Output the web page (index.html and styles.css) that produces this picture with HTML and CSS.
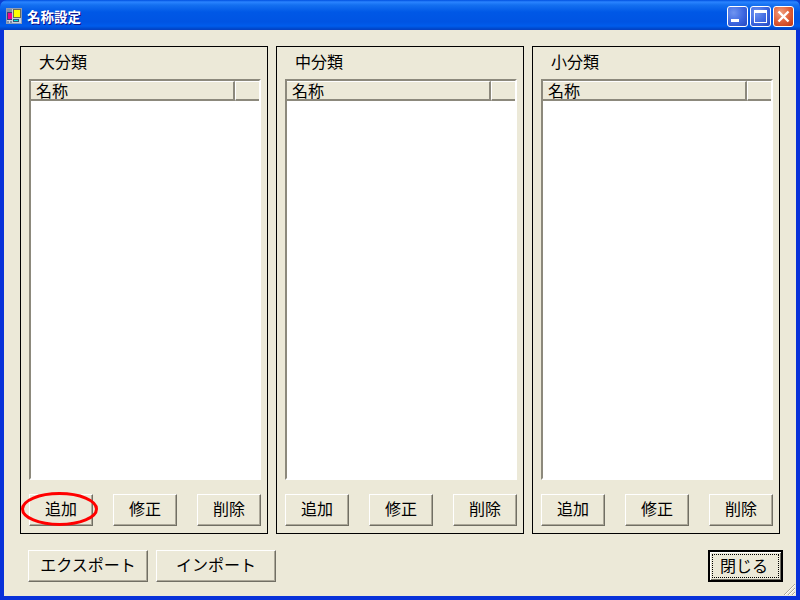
FILE: index.html
```html
<!DOCTYPE html>
<html lang="ja">
<head>
<meta charset="utf-8">
<title>名称設定</title>
<link rel="stylesheet" href="styles.css">
</head>
<body>
<div class="window">
  <header class="titlebar">
    <svg class="appicon" width="16" height="16" viewBox="0 0 16 16">
      <rect x="0" y="0" width="16" height="16" fill="#8f9cb4"/>
      <rect x="1" y="1" width="14" height="14" fill="#c8d0e0"/>
      <rect x="1" y="1" width="5" height="3" fill="#7f8fa8"/>
      <rect x="7" y="1" width="8" height="9" fill="#6a6a58"/>
      <rect x="8" y="2" width="6" height="7" fill="#ffff00"/>
      <rect x="1" y="4" width="5" height="8" fill="#3c3c78"/>
      <rect x="2" y="5" width="4" height="6" fill="#f0008c"/>
      <rect x="7" y="11" width="6" height="3" fill="#305878"/>
      <rect x="8" y="12" width="4" height="1" fill="#00e0e0"/>
      <rect x="1" y="13" width="2" height="2" fill="#7f8fa8"/>
      <rect x="4" y="13" width="2" height="2" fill="#7f8fa8"/>
    </svg>
    <span class="title">名称設定</span>
    <div class="winbtns">
      <span class="winbtn blue">
        <svg width="21" height="21" viewBox="0 0 21 21"><rect x="4" y="13" width="8" height="3" fill="#fff"/></svg>
      </span>
      <span class="winbtn blue">
        <svg width="21" height="21" viewBox="0 0 21 21"><path d="M4 4h13v13H4z M5 7v9h11V7z" fill="#fff" fill-rule="evenodd"/></svg>
      </span>
      <span class="winbtn red">
        <svg width="21" height="21" viewBox="0 0 21 21"><path d="M5.5 5.5l10 10M15.5 5.5l-10 10" stroke="#fff" stroke-width="2.4" fill="none"/></svg>
      </span>
    </div>
  </header>
  <main class="client">
    <div class="panels">
      <section class="panel">
        <h2 class="panel-title">大分類</h2>
        <div class="list">
          <div class="list-head"><span class="col-name">名称</span><span class="col-rest"></span></div>
          <div class="list-body"></div>
        </div>
        <div class="actions">
          <span class="marked">
            <button class="btn small">追加</button>
            <svg class="ring" width="78" height="36" viewBox="0 0 78 36"><ellipse cx="38.5" cy="17" rx="37" ry="15.5" fill="none" stroke="#ff0000" stroke-width="3"/></svg>
          </span>
          <button class="btn small">修正</button>
          <button class="btn small">削除</button>
        </div>
      </section>
      <section class="panel">
        <h2 class="panel-title">中分類</h2>
        <div class="list">
          <div class="list-head"><span class="col-name">名称</span><span class="col-rest"></span></div>
          <div class="list-body"></div>
        </div>
        <div class="actions">
          <button class="btn small">追加</button>
          <button class="btn small">修正</button>
          <button class="btn small">削除</button>
        </div>
      </section>
      <section class="panel">
        <h2 class="panel-title">小分類</h2>
        <div class="list">
          <div class="list-head"><span class="col-name">名称</span><span class="col-rest"></span></div>
          <div class="list-body"></div>
        </div>
        <div class="actions">
          <button class="btn small">追加</button>
          <button class="btn small">修正</button>
          <button class="btn small">削除</button>
        </div>
      </section>
    </div>
    <div class="footer">
      <button class="btn wide">エクスポート</button>
      <button class="btn wide">インポート</button>
      <button class="btn close"><span class="focus">閉じる</span></button>
    </div>
    <svg class="grip" width="14" height="14" viewBox="0 0 14 14">
      <path d="M13 2L2 13M13 6L6 13M13 10L10 13" stroke="#aca899" stroke-width="1" fill="none"/>
      <path d="M13 3L3 13M13 7L7 13M13 11L11 13" stroke="#fff" stroke-width="1" fill="none"/>
    </svg>
  </main>
</div>
</body>
</html>
```
FILE: styles.css
```css
* { box-sizing: border-box; }
html, body { margin: 0; padding: 0; width: 800px; height: 600px; overflow: hidden; background: #0a3fd0; }
body, button, h2 { font-family: "Noto Sans CJK JP", "Liberation Sans", sans-serif; font-weight: 400; color: #000; }

.window {
  width: 800px; height: 600px;
  display: flex; flex-direction: column;
  background: #0831d9;
  border-radius: 7px 7px 0 0;
  overflow: hidden;
}
.titlebar {
  height: 30px; flex: none;
  display: flex; align-items: center;
  padding: 0 6px 0 6px;
  background: linear-gradient(to bottom, #0050e0 0, #2a84ff 2px, #1470f0 5px, #0058e6 12px, #0054e3 22px, #005cec 26px, #0046c8 29px, #0a3fc0 30px);
}
.appicon { flex: none; margin-right: 5px; margin-top: 1px; }
.title {
  font-size: 13.5px; font-weight: 700; color: #fff; line-height: 14px;
  text-shadow: 1px 1px 0 #0f1089;
  margin-top: 2px;
  flex: 1;
}
.winbtns { display: flex; gap: 2px; margin-top: 3px; }
.winbtn {
  width: 21px; height: 21px; display: block;
  border: 1px solid #fff; border-radius: 3px; overflow: hidden;
}
.winbtn svg { display: block; margin: -1px; }
.winbtn.blue { background: radial-gradient(circle at 30% 30%, #6f94f0 0, #3c66e0 55%, #2448c0 100%); }
.winbtn.red { background: radial-gradient(circle at 35% 30%, #f0a080 0, #e0603a 50%, #c0340f 100%); }

.client {
  position: relative;
  flex: 1;
  margin: 0 4px 4px;
  background: #ece9d8;
  padding: 16px 16px 0;
}
.panels { display: flex; gap: 8px; }
.panel {
  width: 248px; height: 488px;
  border: 1px solid #000;
  padding: 0 8px;
  display: flex; flex-direction: column;
}
.panel-title {
  margin: 0; height: 32px;
  font-size: 16px; line-height: 28px;
  padding-left: 10px;
}
.list {
  width: 232px; height: 401px;
  display: flex; flex-direction: column;
  border-top: 2px solid #8c897c; border-left: 2px solid #8c897c;
  border-right: 2px solid #fff; border-bottom: 2px solid #fff;
  background: #fff;
  margin-bottom: 14px;
}
.list-head {
  height: 20px; flex: none; display: flex;
  background: #ece9d8;
  font-size: 16px;
}
.col-name {
  width: 204px; padding-left: 5px;
  border-top: 1px solid #fff; border-right: 2px solid #8c897c;
  border-bottom: 2px solid #8c897c;
  line-height: 17px;
}
.col-rest {
  flex: 1;
  border-left: 1px solid #fff; border-top: 1px solid #fff;
  border-bottom: 2px solid #8c897c;
}
.list-body { flex: 1; background: #fff; }

.actions { display: flex; gap: 20px; width: 232px; }
.marked { position: relative; display: block; width: 64px; height: 32px; }
.ring { position: absolute; left: -8px; top: -2px; pointer-events: none; overflow: visible; }

.btn {
  display: block; margin: 0; padding: 0 0 4px;
  height: 32px;
  background: #ece9d8;
  font-size: 16px; line-height: 24px;
  border: 1px solid;
  border-color: #fff #716f64 #716f64 #fff;
  box-shadow: inset -1px -1px 0 #aca899;
  border-radius: 0;
}
.small { width: 64px; }
.wide { width: 120px; }

.footer { display: flex; gap: 8px; margin-top: 16px; padding-left: 8px; }
.close {
  width: 75px; margin-left: auto; margin-right: -3px;
  border: 2px solid #000;
  box-shadow: inset 1px 1px 0 #fff, inset -1px -1px 0 #716f64;
  padding: 2px;
}
.focus {
  display: block; height: 24px; line-height: 20px;
  padding-right: 3px;
  border: 1px dotted #000;
}
.grip { position: absolute; right: 0; bottom: 0; }
```
